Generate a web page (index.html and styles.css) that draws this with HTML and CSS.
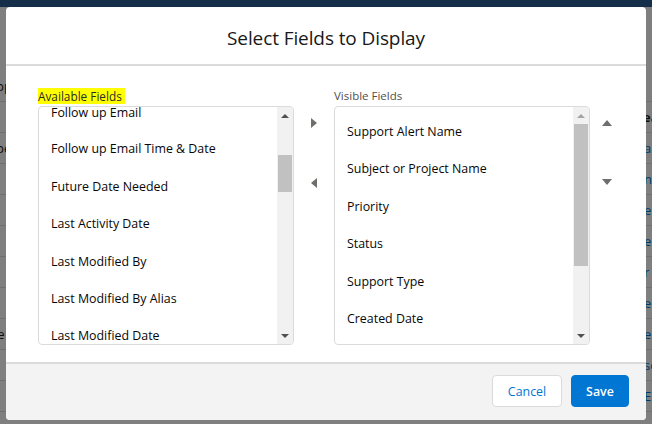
FILE: index.html
```html
<!DOCTYPE html>
<html>
<head>
<meta charset="utf-8">
<link rel="stylesheet" href="styles.css">
</head>
<body>
<div class="page">
  <div class="topbar"></div>
  <div class="rows">
    <div class="row"><span class="lcell">Opportunity</span><span class="rcell"></span></div>
    <div class="row"><span class="lcell"></span><span class="rcell head">ear</span></div>
    <div class="row"><span class="lcell">Open</span><span class="rcell">a</span></div>
    <div class="row"><span class="lcell"></span><span class="rcell">n</span></div>
    <div class="row"><span class="lcell"></span><span class="rcell">e</span></div>
    <div class="row"><span class="lcell"></span><span class="rcell">e</span></div>
    <div class="row"><span class="lcell"></span><span class="rcell">r</span></div>
    <div class="row"><span class="lcell"></span><span class="rcell">e</span></div>
    <div class="row"><span class="lcell">ine</span><span class="rcell">e</span></div>
    <div class="row"><span class="lcell"></span><span class="rcell">se</span></div>
    <div class="row"><span class="lcell"></span><span class="rcell">E</span></div>
  </div>
</div>
<div class="backdrop"></div>
<div class="modal">
  <header class="modal-header">
    <h2 class="title">Select Fields to Display</h2>
  </header>
  <section class="modal-body">
    <div class="column">
      <div class="label"><span class="highlight">Available Fields</span></div>
      <div class="listbox">
        <ul class="options scrolled">
          <li>Follow up Email</li>
          <li>Follow up Email Time &amp; Date</li>
          <li>Future Date Needed</li>
          <li>Last Activity Date</li>
          <li>Last Modified By</li>
          <li>Last Modified By Alias</li>
          <li>Last Modified Date</li>
        </ul>
        <div class="scrollbar">
          <span class="sb-up dark"></span>
          <div class="track"><div class="thumb thumb-left"></div></div>
          <span class="sb-down"></span>
        </div>
      </div>
    </div>
    <div class="movers">
      <span class="tri-right"></span>
      <span class="tri-left"></span>
    </div>
    <div class="column">
      <div class="label">Visible Fields</div>
      <div class="listbox">
        <ul class="options top">
          <li>Support Alert Name</li>
          <li>Subject or Project Name</li>
          <li>Priority</li>
          <li>Status</li>
          <li>Support Type</li>
          <li>Created Date</li>
        </ul>
        <div class="scrollbar">
          <span class="sb-up light"></span>
          <div class="track"><div class="thumb thumb-right"></div></div>
          <span class="sb-down"></span>
        </div>
      </div>
    </div>
    <div class="orderers">
      <span class="tri-up"></span>
      <span class="tri-down"></span>
    </div>
  </section>
  <footer class="modal-footer">
    <button class="btn btn-neutral">Cancel</button>
    <button class="btn btn-brand">Save</button>
  </footer>
</div>
</body>
</html>
```
FILE: styles.css
```css
* { box-sizing: border-box; }
html, body { margin: 0; padding: 0; }
body {
  width: 652px;
  height: 424px;
  overflow: hidden;
  background: #ffffff;
  font-family: "Open Sans", "Noto Sans", sans-serif;
  position: relative;
}
.page { width: 652px; height: 424px; }
.topbar {
  height: 7px;
  background: #2a5f96;
}
.rows { padding-top: 64px; }
.row {
  height: 31px;
  border-bottom: 1px solid #e0e0e0;
  display: flex;
  justify-content: space-between;
  align-items: center;
  font-size: 13px;
}
.lcell {
  color: #1a1a1a;
  margin-left: -14px;
  width: 120px;
  white-space: nowrap;
}
.rcell {
  color: #0176d3;
  width: 7px;
  overflow: hidden;
  white-space: nowrap;
  text-indent: -1px;
}
.rcell.head { color: #1a1a1a; font-weight: 700; text-indent: -2px; }
.backdrop {
  position: absolute;
  inset: 0;
  background: rgba(0, 0, 0, 0.5);
}
.modal {
  position: absolute;
  left: 6px;
  top: 7px;
  width: 640px;
  height: 413px;
  background: #ffffff;
  border-radius: 4px;
  display: flex;
  flex-direction: column;
  overflow: hidden;
}
.modal-header {
  height: 59px;
  border-bottom: 2px solid #dddbda;
  display: flex;
  align-items: center;
  justify-content: center;
}
.title {
  margin: 0;
  font-weight: 400;
  font-size: 19px;
  color: #181818;
  padding-top: 4px;
  letter-spacing: -0.1px;
}
.modal-body {
  flex: 1;
  display: grid;
  grid-template-columns: 256px 40px 256px 1fr;
  padding: 22px 0 0 32px;
}
.column { display: flex; flex-direction: column; }
.label {
  height: 18px;
  font-size: 11.5px;
  line-height: 16px;
  color: #514f4d;
}
.highlight {
  background: #ffff00;
  color: #2b2b2b;
  display: inline-block;
  font-size: 11.8px;
  padding: 0 3px 0 0;
  height: 16px;
}
.listbox {
  height: 239px;
  border: 1px solid #dddbda;
  border-radius: 4px;
  display: flex;
  overflow: hidden;
  background: #fff;
}
.options {
  flex: 1;
  margin: 0;
  padding: 0;
  list-style: none;
  font-size: 12.4px;
  color: #080707;
  overflow: hidden;
}
.options li {
  height: 37.4px;
  line-height: 37.4px;
  padding-left: 12px;
  white-space: nowrap;
}
.options.scrolled li:first-child {
  height: 23.4px;
  line-height: 11px;
}
.options.top { padding-top: 6px; }
.scrollbar {
  width: 16px;
  background: #f1f1f1;
  display: flex;
  flex-direction: column;
  align-items: center;
  padding: 0 1px;
}
.sb-up, .sb-down {
  height: 17px;
  width: 100%;
  display: flex;
  align-items: center;
  justify-content: center;
  flex: none;
}
.sb-up::before {
  content: "";
  border-left: 4px solid transparent;
  border-right: 4px solid transparent;
  border-bottom: 4px solid #505050;
}
.sb-up.light::before { border-bottom-color: #a3a3a3; }
.sb-down::before {
  content: "";
  border-left: 4px solid transparent;
  border-right: 4px solid transparent;
  border-top: 4px solid #505050;
}
.track { flex: 1; width: 100%; }
.thumb { background: #c1c1c1; width: 100%; }
.thumb-left { margin-top: 31px; height: 37px; }
.thumb-right { margin-top: 0; height: 142px; }
.movers, .orderers {
  display: flex;
  flex-direction: column;
  align-items: center;
  padding-top: 30px;
  gap: 50px;
}
.orderers { padding-right: 22px; padding-top: 32px; gap: 53px; }
.tri-right {
  width: 0; height: 0;
  border-top: 5px solid transparent;
  border-bottom: 5px solid transparent;
  border-left: 6px solid #706e6b;
}
.tri-left {
  width: 0; height: 0;
  border-top: 5px solid transparent;
  border-bottom: 5px solid transparent;
  border-right: 6px solid #706e6b;
}
.tri-up {
  width: 0; height: 0;
  border-left: 5px solid transparent;
  border-right: 5px solid transparent;
  border-bottom: 6px solid #706e6b;
}
.tri-down {
  width: 0; height: 0;
  border-left: 5px solid transparent;
  border-right: 5px solid transparent;
  border-top: 6px solid #706e6b;
}
.modal-footer {
  height: 58px;
  background: #f3f3f3;
  border-top: 2px solid #dddbda;
  display: flex;
  justify-content: flex-end;
  align-items: center;
  gap: 9px;
  padding: 0 17px 2px 0;
}
.btn {
  height: 32px;
  border-radius: 4px;
  font-family: "Open Sans", "Noto Sans", sans-serif;
  font-size: 12.4px;
  padding: 0;
  cursor: pointer;
}
.btn-neutral {
  width: 70px;
  background: #ffffff;
  border: 1px solid #dddbda;
  color: #0176d3;
}
.btn-brand {
  width: 58px;
  background: #0176d3;
  border: 1px solid #0176d3;
  color: #ffffff;
  font-weight: 600;
}
```
